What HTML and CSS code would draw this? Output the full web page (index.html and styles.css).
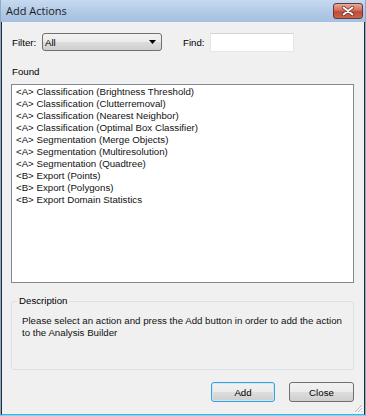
FILE: index.html
```html
<!DOCTYPE html>
<html>
<head>
<meta charset="utf-8">
<link rel="stylesheet" href="styles.css">
</head>
<body>
<div class="window">
  <div class="titlebar">
    <span class="title">Add Actions</span>
    <div class="closebtn">
      <svg width="14" height="10" viewBox="0 0 14 10">
        <path d="M2.5 1.5 L11.5 8.5 M11.5 1.5 L2.5 8.5" stroke="#5a2a22" stroke-width="3.4" stroke-linecap="round"/>
        <path d="M2.5 1.5 L11.5 8.5 M11.5 1.5 L2.5 8.5" stroke="#ffffff" stroke-width="2" stroke-linecap="round"/>
      </svg>
    </div>
  </div>
  <div class="client">
    <div class="filter-row">
      <span class="lbl-filter">Filter:</span>
      <div class="combo">
        <span>All</span>
        <svg class="arrow" width="7" height="4" viewBox="0 0 7 4"><path d="M0 0 H7 L3.5 4 Z" fill="#000"/></svg>
      </div>
      <span class="lbl-find">Find:</span>
      <div class="findbox"></div>
    </div>
    <div class="found-lbl">Found</div>
    <div class="listbox">
      <div class="item">&lt;A&gt; Classification (Brightness Threshold)</div>
      <div class="item">&lt;A&gt; Classification (Clutterremoval)</div>
      <div class="item">&lt;A&gt; Classification (Nearest Neighbor)</div>
      <div class="item">&lt;A&gt; Classification (Optimal Box Classifier)</div>
      <div class="item">&lt;A&gt; Segmentation (Merge Objects)</div>
      <div class="item">&lt;A&gt; Segmentation (Multiresolution)</div>
      <div class="item">&lt;A&gt; Segmentation (Quadtree)</div>
      <div class="item">&lt;B&gt; Export (Points)</div>
      <div class="item">&lt;B&gt; Export (Polygons)</div>
      <div class="item">&lt;B&gt; Export Domain Statistics</div>
    </div>
    <fieldset class="group">
      <legend>Description</legend>
      <p class="desc">Please select an action and press the Add button in order to add the action to the Analysis Builder</p>
    </fieldset>
    <div class="buttons">
      <div class="btn btn-default">Add</div>
      <div class="btn">Close</div>
    </div>
    <svg class="grip" width="10" height="10" viewBox="0 0 10 10">
      <path d="M9 2 L2 9 M9 5 L5 9 M9 8 L8 9" stroke="#b8b8b8" stroke-width="1"/>
      <path d="M10 3 L3 10 M10 6 L6 10" stroke="#ffffff" stroke-width="1"/>
    </svg>
  </div>
</div>
</body>
</html>
```
FILE: styles.css
```css
html, body {
  margin: 0;
  padding: 0;
  background: #f0f0f0;
}
.window {
  width: 366px;
  height: 416px;
  box-sizing: border-box;
  display: flex;
  flex-direction: column;
  border-left: 1px solid #8fa9c8;
  border-right: 1px solid #8fa9c8;
  border-bottom: 1px solid #7fd6f4;
  background: #a9c3e2;
  font-family: "Liberation Sans", Arial, sans-serif;
  font-size: 9.7px;
  color: #000;
}
.titlebar {
  height: 22px;
  flex: none;
  display: flex;
  align-items: center;
  justify-content: space-between;
  padding-left: 5px;
  padding-right: 2px;
  background: linear-gradient(#c6daf0, #b0c8e5 60%, #a6c0e1);
}
.title {
  font-family: "Open Sans", "Liberation Sans", sans-serif;
  font-size: 11px;
  color: #1a1a1a;
  margin-top: -1px;
}
.closebtn {
  width: 30px;
  height: 16px;
  margin-top: 0;
  box-sizing: border-box;
  border: 1px solid #5e3a3a;
  border-radius: 3px;
  background: linear-gradient(#e9a898, #d36f5c 45%, #c24a35 55%, #c9644c);
  display: flex;
  align-items: center;
  justify-content: center;
}
.client {
  flex: 1;
  position: relative;
  background: #f0f0f0;
  border-left: 1px solid #222b35;
  border-right: 1px solid #222b35;
  border-bottom: 1px solid #38b6e6;
  padding: 0 10px 0 9px;
  display: flex;
  flex-direction: column;
}
.filter-row {
  margin-top: 11px;
  height: 18px;
  display: flex;
  align-items: center;
}
.lbl-filter {
  width: 31px;
  padding-left: 1px;
  box-sizing: border-box;
}
.combo {
  width: 120px;
  height: 18px;
  box-sizing: border-box;
  border: 1px solid #707070;
  border-radius: 3px;
  background: linear-gradient(#f2f2f2, #ebebeb 50%, #dddddd 50%, #cfcfcf);
  display: flex;
  align-items: center;
  justify-content: space-between;
  padding: 0 5px 0 2px;
}
.arrow {
  display: block;
}
.lbl-find {
  margin-left: 21px;
  width: 27px;
}
.findbox {
  width: 84px;
  height: 19px;
  box-sizing: border-box;
  background: #fff;
  border: 1px solid;
  border-color: #d2d5db #e3e6ea #e6e8ec #e3e6ea;
}
.found-lbl {
  margin-top: 15px;
  height: 12px;
  line-height: 12px;
  padding-left: 1px;
}
.listbox {
  margin-top: 6px;
  height: 199px;
  box-sizing: border-box;
  background: #fff;
  border: 1px solid #828790;
  padding: 1px 4px;
}
.item {
  height: 12px;
  line-height: 12px;
  white-space: nowrap;
  color: #111;
}
.group {
  margin: 12px 0 0 0;
  padding: 8px 9px 30px 10px;
  border: 1px solid #d8e1e6;
  border-radius: 3px;
  min-width: 0;
}
.group legend {
  padding: 0 2px;
  margin-left: -5px;
  line-height: 12px;
  height: 12px;
}
.desc {
  margin: 0;
  line-height: 12px;
  color: #111;
}
.buttons {
  margin-top: 12px;
  display: flex;
  justify-content: flex-end;
  gap: 14px;
}
.btn {
  width: 65px;
  height: 20px;
  box-sizing: border-box;
  border: 1px solid #707070;
  border-radius: 3px;
  background: linear-gradient(#f2f2f2, #ebebeb 50%, #dddddd 50%, #cfcfcf);
  display: flex;
  align-items: center;
  justify-content: center;
}
.btn-default {
  width: 64px;
  border-color: #3c9fd6;
  box-shadow: inset 0 0 0 1px #cbeaf8;
}
.grip {
  position: absolute;
  right: 1px;
  bottom: 1px;
}
```
